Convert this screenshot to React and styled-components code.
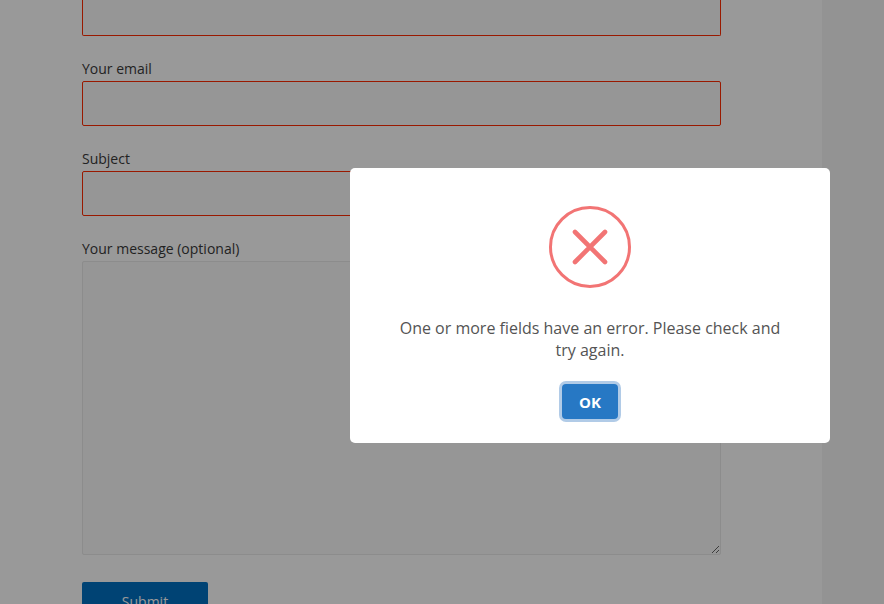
import React from "react";
import styled, { createGlobalStyle } from "styled-components";

const GlobalStyle = createGlobalStyle`
  *, *::before, *::after { box-sizing: border-box; }
  body {
    margin: 0;
    overflow: hidden;
    font-family: "Open Sans", "Noto Sans", sans-serif;
    color: #3a3a3a;
    background: #f5f5f5;
  }
`;

const Page = styled.div`
  display: flex;
  height: 100vh;
  overflow: hidden;
`;

const Content = styled.main`
  flex: 1;
  padding: 0 101px 0 82px;
  background: #ffffff;
`;

const Sidebar = styled.aside`
  flex: 0 0 62px;
`;

const Form = styled.form`
  display: flex;
  flex-direction: column;
  gap: 21px;
`;

const Field = styled.label`
  display: flex;
  flex-direction: column;
  font-size: 14px;
  line-height: 24px;
`;

const Input = styled.input`
  width: 100%;
  height: ${({ $clipped }) => ($clipped ? "36px" : "45px")};
  padding: 12px;
  border: 1px solid #ff2b00;
  border-top-width: ${({ $clipped }) => ($clipped ? "0" : "1px")};
  border-radius: ${({ $clipped }) => ($clipped ? "0 0 2px 2px" : "2px")};
  background: #fafafa;
  font: inherit;
`;

const TextArea = styled.textarea`
  width: 100%;
  height: 294px;
  padding: 12px;
  border: 1px solid #eaeaea;
  border-radius: 2px;
  background: #fafafa;
  font: inherit;
  resize: both;
`;

const SubmitButton = styled.button`
  align-self: flex-start;
  width: 126px;
  height: 40px;
  margin-top: 6px;
  border: 0;
  border-radius: 2px;
  background: #0170c1;
  color: #ffffff;
  font-family: inherit;
  font-size: 14px;
  line-height: 20px;
`;

const Overlay = styled.div`
  position: fixed;
  inset: 0;
  display: flex;
  align-items: center;
  justify-content: center;
  padding: 7px 0 0 296px;
  background: rgba(0, 0, 0, 0.4);
`;

const Dialog = styled.div`
  display: flex;
  flex-direction: column;
  align-items: center;
  width: 480px;
  padding: 38px 48px 21px;
  border-radius: 5px;
  background: #ffffff;
`;

const ErrorIcon = styled.svg`
  display: block;
  width: 82px;
  height: 82px;
  fill: none;
  stroke: #f27474;
`;

const Message = styled.p`
  margin: 29px 0 20px;
  color: #545454;
  font-size: 16px;
  line-height: 22px;
  text-align: center;
`;

const OkButton = styled.button`
  width: 56px;
  height: 35px;
  margin: 3px;
  padding: 0;
  border: 0;
  border-radius: 4px;
  background: #2778c4;
  box-shadow: 0 0 0 3px #b1cbe7;
  color: #ffffff;
  font-family: inherit;
  font-size: 15px;
  font-weight: 700;
  line-height: 20px;
`;

export default function App() {
  return (
    <>
      <GlobalStyle />
      <Page>
        <Content>
          <Form noValidate onSubmit={(event) => event.preventDefault()}>
            <Input $clipped aria-label="Your name" aria-invalid="true" type="text" />
            <Field>
              Your email
              <Input aria-invalid="true" type="email" />
            </Field>
            <Field>
              Subject
              <Input aria-invalid="true" type="text" />
            </Field>
            <Field>
              Your message (optional)
              <TextArea />
            </Field>
            <SubmitButton type="submit">Submit</SubmitButton>
          </Form>
        </Content>
        <Sidebar />
      </Page>
      <Overlay>
        <Dialog role="alertdialog" aria-modal="true" aria-describedby="error-message">
          <ErrorIcon viewBox="0 0 82 82" aria-hidden="true">
            <circle cx="41" cy="41" r="39.5" strokeWidth="3" />
            <path d="M26 26 56 56M56 26 26 56" strokeWidth="4.6" strokeLinecap="round" />
          </ErrorIcon>
          <Message id="error-message">
            One or more fields have an error. Please check and try again.
          </Message>
          <OkButton type="button">OK</OkButton>
        </Dialog>
      </Overlay>
    </>
  );
}
